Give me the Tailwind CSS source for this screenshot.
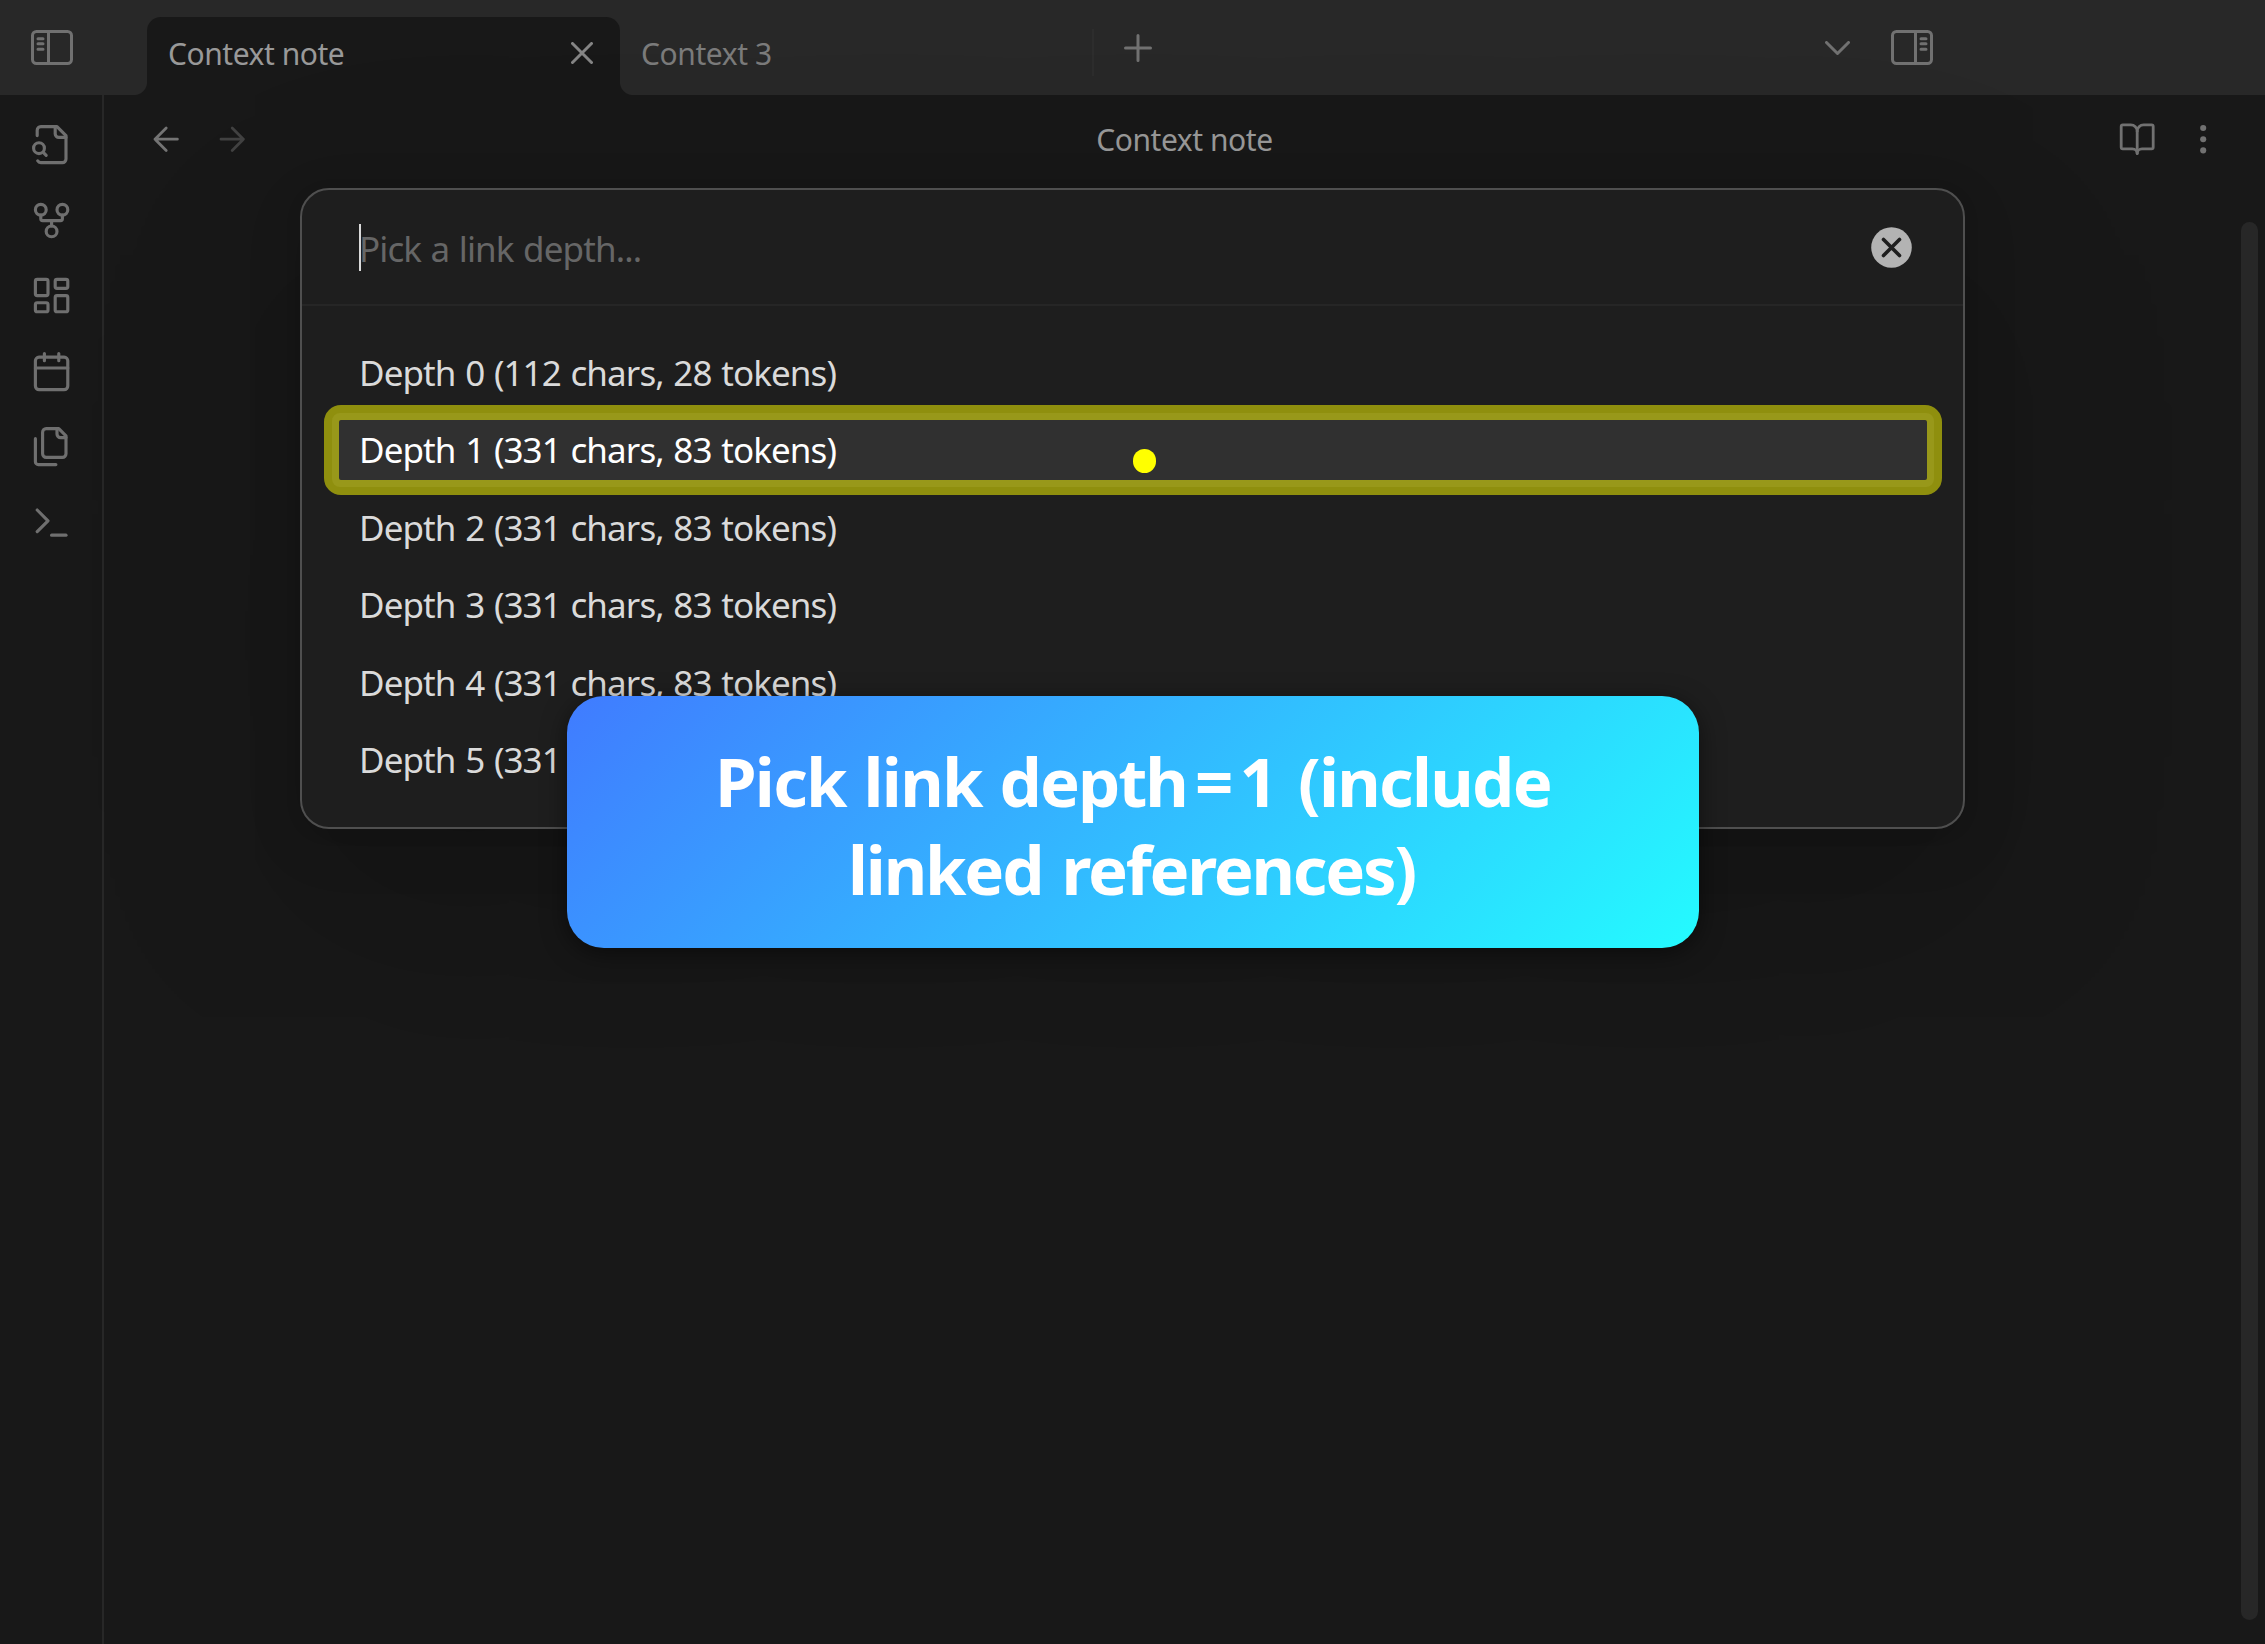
<!DOCTYPE html>
<html lang="en">
<head>
<meta charset="utf-8">
<title>Context note</title>
<script src="https://cdn.jsdelivr.net/npm/@tailwindcss/browser@4"></script>
</head>
<body class="relative flex h-[1644px] w-[2265px] flex-col overflow-hidden bg-[#181818] font-['Noto_Sans',sans-serif] text-[#999999]">

  <!-- Title bar with tabs -->
  <header class="flex h-[95px] shrink-0 items-start bg-[#282828] text-[#717171]">
    <div class="flex h-[95px] w-[147px] items-center pl-[31px]">
      <svg class="h-[35px] w-[42px]" viewBox="0 0 42 35" fill="none" stroke="currentColor" stroke-width="3" stroke-linecap="round"><rect x="1.5" y="1.5" width="39" height="32" rx="4"/><path d="M17.5 2v31M7 8.7h5M7 13.8h5M7 19.2h5"/></svg>
    </div>
    <div class="relative mt-[17px] flex h-[78px] w-[473px] items-center justify-between rounded-t-[14px] bg-[#181818] pr-[27px] pl-[21px]">
      <span class="absolute right-full bottom-0 size-[13px] bg-[radial-gradient(circle_at_0_0,transparent_12.5px,#181818_13.5px)]"></span>
      <span class="absolute bottom-0 left-full size-[13px] bg-[radial-gradient(circle_at_100%_0,transparent_12.5px,#181818_13.5px)]"></span>
      <span class="mt-[-5px] text-[30px] leading-[40px] tracking-[-0.45px] whitespace-nowrap text-[#999999]">Context note</span>
      <svg class="mt-[-6px] size-[22px] text-[#858585]" viewBox="0 0 22 22" stroke="currentColor" stroke-width="3" stroke-linecap="round"><path d="M1.5 1.5l19 19M20.5 1.5l-19 19"/></svg>
    </div>
    <div class="mt-[17px] flex h-[78px] w-[472px] items-center pl-[21px]">
      <span class="mt-[-5px] text-[30px] leading-[40px] tracking-[-0.42px] whitespace-nowrap text-[#7b7b7b]">Context 3</span>
    </div>
    <div class="mt-[29px] h-[47px] w-[2px] bg-[#2d2d2d]"></div>
    <svg class="mt-[34px] ml-[30px] size-[28px]" viewBox="0 0 28 28" stroke="currentColor" stroke-width="3" stroke-linecap="round"><path d="M14 1.5v25M1.5 14h25"/></svg>
    <svg class="mt-[41px] ml-[673px] h-[14px] w-[25px]" viewBox="0 0 25 14" fill="none" stroke="currentColor" stroke-width="3" stroke-linecap="round" stroke-linejoin="round"><path d="M1.5 1.5l11 11 11-11"/></svg>
    <svg class="mt-[30px] ml-[41px] h-[35px] w-[42px]" viewBox="0 0 42 35" fill="none" stroke="currentColor" stroke-width="3" stroke-linecap="round"><rect x="1.5" y="1.5" width="39" height="32" rx="4"/><path d="M24.5 2v31M30 8.7h5M30 13.8h5M30 19.2h5"/></svg>
  </header>

  <div class="flex min-h-0 flex-1">
    <!-- Ribbon -->
    <nav class="flex w-[104px] shrink-0 flex-col items-center gap-[32.4px] border-r-2 border-[#272727] pt-[28px] pl-px text-[#6f6f6f]">
      <svg class="size-[43.2px] shrink-0" viewBox="0 0 24 24" fill="none" stroke="currentColor" stroke-width="1.75" stroke-linecap="round" stroke-linejoin="round"><path d="M14 2v4a2 2 0 0 0 2 2h4"/><path d="M4.268 21a2 2 0 0 0 1.727 1H18a2 2 0 0 0 2-2V7l-5-5H6a2 2 0 0 0-2 2v3"/><path d="m9 18-1.5-1.5"/><circle cx="5" cy="14" r="3"/></svg>
      <svg class="size-[43.2px] shrink-0" viewBox="0 0 24 24" fill="none" stroke="currentColor" stroke-width="1.75" stroke-linecap="round" stroke-linejoin="round"><circle cx="12" cy="18" r="3"/><circle cx="6" cy="6" r="3"/><circle cx="18" cy="6" r="3"/><path d="M18 9v2c0 .6-.4 1-1 1H7c-.6 0-1-.4-1-1V9"/><path d="M12 12v3"/></svg>
      <svg class="size-[43.2px] shrink-0" viewBox="0 0 24 24" fill="none" stroke="currentColor" stroke-width="1.75" stroke-linecap="round" stroke-linejoin="round"><rect x="3" y="3" width="7" height="9" rx="1"/><rect x="14" y="3" width="7" height="5" rx="1"/><rect x="14" y="12" width="7" height="9" rx="1"/><rect x="3" y="16" width="7" height="5" rx="1"/></svg>
      <svg class="size-[43.2px] shrink-0" viewBox="0 0 24 24" fill="none" stroke="currentColor" stroke-width="1.75" stroke-linecap="round" stroke-linejoin="round"><path d="M8 2v4M16 2v4"/><rect x="3" y="4" width="18" height="18" rx="2"/><path d="M3 10h18"/></svg>
      <svg class="size-[43.2px] shrink-0" viewBox="0 0 24 24" fill="none" stroke="currentColor" stroke-width="1.75" stroke-linecap="round" stroke-linejoin="round"><path d="M20 7h-3a2 2 0 0 1-2-2V2"/><path d="M9 18a2 2 0 0 1-2-2V4a2 2 0 0 1 2-2h7l4 4v10a2 2 0 0 1-2 2Z"/><path d="M3 7.6v12.8A1.6 1.6 0 0 0 4.6 22h9.8"/></svg>
      <svg class="size-[43.2px] shrink-0" viewBox="0 0 24 24" fill="none" stroke="currentColor" stroke-width="1.75" stroke-linecap="round" stroke-linejoin="round"><path d="m4 17 6-6-6-6"/><path d="M12 19h8"/></svg>
    </nav>

    <main class="flex flex-1 flex-col">
      <div class="grid h-[88px] grid-cols-3 items-center px-[43px]">
        <div class="flex items-center gap-[28px]">
          <svg class="size-[38.4px] text-[#747474]" viewBox="0 0 24 24" fill="none" stroke="currentColor" stroke-width="1.75" stroke-linecap="round" stroke-linejoin="round"><path d="m12 19-7-7 7-7M19 12H5"/></svg>
          <svg class="size-[38.4px] text-[#424242]" viewBox="0 0 24 24" fill="none" stroke="currentColor" stroke-width="1.75" stroke-linecap="round" stroke-linejoin="round"><path d="M5 12h14M12 5l7 7-7 7"/></svg>
        </div>
        <div class="mt-[2px] justify-self-center text-[30px] leading-[40px] tracking-[-0.45px] whitespace-nowrap">Context note</div>
        <div class="flex items-center justify-end gap-[27.5px] text-[#717171]">
          <svg class="size-[38.4px]" viewBox="0 0 24 24" fill="none" stroke="currentColor" stroke-width="1.75" stroke-linecap="round" stroke-linejoin="round"><path d="M12 7v14"/><path d="M3 18a1 1 0 0 1-1-1V4a1 1 0 0 1 1-1h5a4 4 0 0 1 4 4 4 4 0 0 1 4-4h5a1 1 0 0 1 1 1v13a1 1 0 0 1-1 1h-6a3 3 0 0 0-3 3 3 3 0 0 0-3-3z"/></svg>
          <svg class="size-[38.4px]" viewBox="0 0 24 24" fill="currentColor"><circle cx="12" cy="5" r="1.9"/><circle cx="12" cy="12" r="1.9"/><circle cx="12" cy="19" r="1.9"/></svg>
        </div>
      </div>
      <div class="flex flex-1 justify-end pt-[39px] pr-[7px] pb-[24px]">
        <div class="w-[17px] rounded-[10px] bg-[#272727]"></div>
      </div>
    </main>
  </div>

  <!-- Depth picker -->
  <section class="absolute top-[188px] left-[300px] flex h-[641px] w-[1665px] flex-col rounded-[29px] border-2 border-[#4f4f4f] bg-[#1e1e1e] shadow-[0_4px_17px_rgba(0,0,0,0.07),0_15px_59px_rgba(0,0,0,0.11),0_72px_216px_rgba(0,0,0,0.2)]">
    <div class="flex h-[116px] shrink-0 items-center justify-between border-b-2 border-[#262626] pt-px pr-[51px] pl-[57px]">
      <div class="flex items-center">
        <span class="h-[47px] w-[2px] bg-[#dadada]"></span>
        <span class="mt-[3px] ml-[-2px] text-[35px] leading-[48px] tracking-[-0.9px] whitespace-nowrap text-[#666666] [word-spacing:1.3px]">Pick a link depth...</span>
      </div>
      <svg class="size-[41px]" viewBox="0 0 41 41"><circle cx="20.5" cy="20.5" r="20.3" fill="#b3b3b3"/><path d="M12.5 12.5l16 16M28.5 12.5l-16 16" stroke="#1e1e1e" stroke-width="3.6" stroke-linecap="round"/></svg>
    </div>
    <ul class="flex flex-col px-[29px] pt-[28px] text-[35px] leading-[77.4px] tracking-[-0.9px] whitespace-nowrap text-[#dadada] [word-spacing:1.4px]">
      <li class="h-[77.4px] pl-[28px]">Depth 0 (112 chars, 28 tokens)</li>
      <li class="h-[77.4px] rounded-[10px] bg-[#303030] pl-[28px] text-white">Depth 1 (331 chars, 83 tokens)</li>
      <li class="h-[77.4px] pl-[28px]">Depth 2 (331 chars, 83 tokens)</li>
      <li class="h-[77.4px] pl-[28px]">Depth 3 (331 chars, 83 tokens)</li>
      <li class="h-[77.4px] pl-[28px]">Depth 4 (331 chars, 83 tokens)</li>
      <li class="h-[77.4px] pl-[28px]">Depth 5 (331</li>
    </ul>
  </section>

  <!-- Highlight and pointer -->
  <div class="absolute top-[404.5px] left-[323.5px] h-[90px] w-[1618px] rounded-[17px] border-[15px] border-[#8f8f0e]">
    <div class="absolute -inset-[7px] rounded-[8px] border-[7px] border-[#98981a]"></div>
  </div>
  <div class="absolute top-[449px] left-[1133px] h-[24px] w-[23px] rounded-full bg-[#ffff00]"></div>

  <!-- Caption -->
  <div class="absolute top-[696px] left-[567px] flex h-[252px] w-[1132px] flex-col items-center rounded-[37px] bg-[linear-gradient(135deg,#407bff,#24fbff)] pt-[41px] text-center text-[67px] leading-[88px] font-bold whitespace-nowrap text-white shadow-[0_5px_24px_rgba(0,0,0,0.5)]">
    <span class="tracking-[-1.7px] [word-spacing:2px]">Pick link <span class="tracking-[-2px]">depth</span><span class="mr-[8px] ml-[8px]">=</span>1 <span class="ml-[4px]">(include</span></span>
    <span class="mr-[3px] tracking-[-2.2px] [word-spacing:4px]">linked references)</span>
  </div>
</body>
</html>
